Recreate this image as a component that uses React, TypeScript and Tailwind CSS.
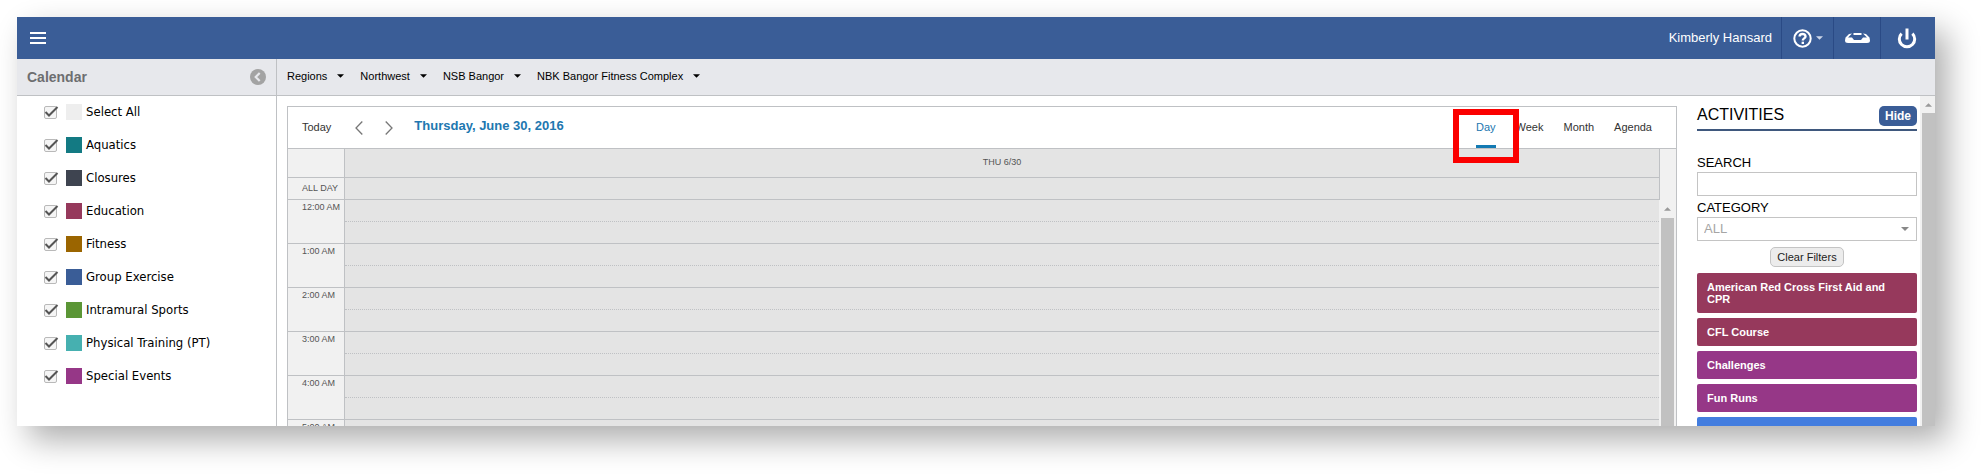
import { useState } from 'react';

interface CalendarCategory {
  name: string;
  color: string;
}

interface Activity {
  id: number;
  name: string;
  color: string;
}

const categories: CalendarCategory[] = [
  { name: 'Select All', color: 'bg-[#eeeeee]' },
  { name: 'Aquatics', color: 'bg-[#137a83]' },
  { name: 'Closures', color: 'bg-[#3e4450]' },
  { name: 'Education', color: 'bg-[#96395c]' },
  { name: 'Fitness', color: 'bg-[#9b6500]' },
  { name: 'Group Exercise', color: 'bg-[#3a5d97]' },
  { name: 'Intramural Sports', color: 'bg-[#5b9636]' },
  { name: 'Physical Training (PT)', color: 'bg-[#46b0b0]' },
  { name: 'Special Events', color: 'bg-[#963787]' },
];

const activities: Activity[] = [
  { id: 1, name: 'American Red Cross First Aid and CPR', color: 'bg-[#96395c]' },
  { id: 2, name: 'CFL Course', color: 'bg-[#96395c]' },
  { id: 3, name: 'Challenges', color: 'bg-[#963787]' },
  { id: 4, name: 'Fun Runs', color: 'bg-[#963787]' },
  { id: 5, name: '', color: 'bg-[#437ddf]' },
];

const locations = ['Regions', 'Northwest', 'NSB Bangor', 'NBK Bangor Fitness Complex'];
const views = ['Day', 'Week', 'Month', 'Agenda'];
const hours = ['12:00 AM', '1:00 AM', '2:00 AM', '3:00 AM', '4:00 AM', '5:00 AM'];

const Caret = ({ className }: { className: string }) => (
  <svg viewBox="0 0 8 4" className={className} fill="currentColor" aria-hidden="true">
    <path d="M0 0h8L4 4z" />
  </svg>
);

const TopBar = () => (
  <header className="flex h-[42px] shrink-0 items-stretch bg-[#3a5d97] text-white">
    <button aria-label="Menu" className="flex items-center px-[13px] pb-3 pt-[11px]">
      <svg viewBox="0 0 16 12" className="h-3 w-4" fill="currentColor">
        <path d="M0 0h16v2H0zM0 5h16v2H0zM0 10h16v2H0z" />
      </svg>
    </button>
    <span className="ml-auto flex items-center pr-[9px] text-[13px]">Kimberly Hansard</span>
    <button aria-label="Help" className="flex w-[52px] items-center justify-center gap-1 border-l border-[#2a4a85]">
      <svg viewBox="0 0 19 19" className="h-[19px] w-[19px]" fill="none" stroke="currentColor">
        <circle cx="9.5" cy="9.5" r="8.2" strokeWidth="2" />
        <path d="M6.6 7.6c0-3.6 5.9-3.4 5.9-.2 0 2-2.7 2-2.7 4" strokeWidth="2.4" />
        <path d="M8.6 12.7h2.400V15H8.6z" fill="currentColor" stroke="none" />
      </svg>
      <Caret className="h-1 w-[7px] text-[#ccd6e8]" />
    </button>
    <button aria-label="Inbox" className="flex w-[47px] items-center justify-center border-l border-[#2a4a85]">
      <svg viewBox="0 0 25 10" className="h-[10px] w-[25px]" fill="currentColor">
        <path d="M8.5 0h8v2h-8z" />
        <path d="M7 .5 4 1 .5 4.5 0 7.5Q0 10 3 10h19q3 0 3-2.5L24.5 4.5 21 1 18 .5l1.5 1.5L22 4.5h-4L16 7H9L7 4.5H3L5.5 2z" />
      </svg>
    </button>
    <button aria-label="Sign out" className="flex w-[55px] items-center justify-center border-l border-[#2a4a85] pr-[3px] pt-[2px]">
      <svg viewBox="0 0 20 22" className="h-[22px] w-5" fill="none" stroke="currentColor" strokeWidth="3">
        <path d="M4.6 5.6a7.700 7.700 0 1 0 10.800 0" />
        <path d="M10 .5v11" />
      </svg>
    </button>
  </header>
);

const Sidebar = () => (
  <aside className="flex w-[260px] shrink-0 flex-col border-r border-[#bfc1c4]">
    <div className="flex h-[37px] shrink-0 items-center justify-between border-b border-[#bfc1c4] bg-[#e7e8ec] px-[10px]">
      <h2 className="text-sm font-bold text-[#6d6e70]">Calendar</h2>
      <button aria-label="Collapse calendar list">
        <svg viewBox="0 0 16 16" className="h-4 w-4">
          <circle cx="8" cy="8" r="8" fill="#a3a3a3" />
          <path d="M9.7 4 5.7 8l4 4" fill="none" stroke="#e7e8ec" strokeWidth="2.2" />
        </svg>
      </button>
    </div>
    <ul className="pt-[3px] font-['DejaVu_Sans_Condensed','DejaVu_Sans',sans-serif] text-[13px] text-black">
      {categories.map(category => (
        <li key={category.name} className="flex h-[33px] items-start pl-[27px] pt-[5px]">
          <label className="flex items-center">
            <span className="grid">
              <input
                type="checkbox"
                defaultChecked
                className="peer col-start-1 row-start-1 h-[13px] w-[13px] appearance-none rounded-[2px] border border-[#b9b9b9] bg-[#f5f5f5]"
              />
              <svg
                viewBox="0 0 13 13"
                className="pointer-events-none invisible col-start-1 row-start-1 h-[13px] w-[13px] overflow-visible peer-checked:visible"
                fill="none"
                stroke="#555"
                strokeWidth="2"
              >
                <path d="M1.5 6 5 9.5 13.5 1" />
              </svg>
            </span>
            <span className={`ml-[9px] mr-1 h-4 w-4 ${category.color}`} />
            <span className="leading-4">{category.name}</span>
          </label>
        </li>
      ))}
    </ul>
  </aside>
);

const CalendarToolbar = () => {
  const [view, setView] = useState('Day');

  return (
    <div className="flex h-[42px] shrink-0 items-stretch border-b border-[#bfc1c4] pl-[14px] pr-6 text-[11px] text-[#333]">
      <button>Today</button>
      <button aria-label="Previous day" className="ml-6">
        <svg viewBox="0 0 8 14" className="h-[14px] w-2" fill="none" stroke="#777" strokeWidth="1.3">
          <path d="M7.3.5 1 7l6.3 6.5" />
        </svg>
      </button>
      <button aria-label="Next day" className="ml-[22px]">
        <svg viewBox="0 0 8 14" className="h-[14px] w-2" fill="none" stroke="#777" strokeWidth="1.3">
          <path d="M.7.5 7 7 .7 13.5" />
        </svg>
      </button>
      <h1 className="ml-[21px] flex items-center pb-[3px] text-[13px] font-bold text-[#2177b0]">
        Thursday, June 30, 2016
      </h1>
      <div className="ml-auto flex gap-5">
        {views.map(name => (
          <div key={name} className="relative flex">
            <button
              onClick={() => setView(name)}
              className={
                view === name
                  ? 'border-b-[3px] border-[#137ab3] pt-[3px] text-[#2177b0]'
                  : 'border-b-[3px] border-transparent pt-[3px]'
              }
            >
              {name}
            </button>
            {name === 'Day' && (
              <div className="pointer-events-none absolute -left-[23px] top-[2px] z-10 h-[54px] w-[66px] border-[6px] border-[#fb0000]" />
            )}
          </div>
        ))}
      </div>
    </div>
  );
};

const DayGrid = () => (
  <div className="flex min-h-0 flex-1 flex-col text-[9px] text-[#555]">
    <div className="flex shrink-0 bg-[#f1f1f1]">
      <table className="w-full table-fixed border-separate border-spacing-0">
        <thead>
          <tr className="h-[29px]">
            <th className="w-[57px] border-b border-r border-[#bfc1c4] bg-[#f1f1f1] p-0" />
            <th className="border-b border-r border-[#bfc1c4] bg-[#e4e4e4] p-0 font-normal">THU 6/30</th>
          </tr>
        </thead>
        <tbody>
          <tr className="h-[22px]">
            <th className="border-b border-r border-[#bfc1c4] bg-[#f1f1f1] p-0 pl-[14px] text-left font-normal">
              ALL DAY
            </th>
            <td className="border-b border-r border-[#bfc1c4] bg-[#e4e4e4] p-0" />
          </tr>
        </tbody>
      </table>
      <div className="w-4 shrink-0" />
    </div>
    <div className="flex min-h-0 flex-1 overflow-hidden">
      <table className="w-full table-fixed border-separate border-spacing-0 self-start">
        <tbody>
          {hours.map(hour => (
            <tr key={hour} className="h-11">
              <th className="w-[57px] whitespace-nowrap border-b border-r border-[#bfc1c4] bg-[#f1f1f1] p-0 pl-[14px] pt-px text-left align-top font-normal leading-3">
                {hour}
              </th>
              <td className="border-b border-[#bfc1c4] bg-[#e4e4e4] p-0 align-top">
                <div className="h-[22px] border-b border-dotted border-[#bfc1c4]" />
              </td>
            </tr>
          ))}
        </tbody>
      </table>
      <div className="flex w-[17px] shrink-0 flex-col items-center bg-[#f1f1f1]">
        <Caret className="my-[7px] h-1 w-[7px] rotate-180 text-[#999]" />
        <div className="w-[13px] flex-1 bg-[#c1c1c1]" />
      </div>
    </div>
  </div>
);

const ActivitiesPanel = () => (
  <aside className="flex w-[220px] shrink-0 flex-col pt-[10px] text-black">
    <div className="flex h-[25px] shrink-0 items-start justify-between border-b-2 border-[#3f587d]">
      <h2 className="text-base leading-[18px]">ACTIVITIES</h2>
      <button className="h-5 rounded-[5px] bg-[#3a5d97] px-[6px] text-xs font-bold text-white">Hide</button>
    </div>
    <label htmlFor="search" className="mt-[23px] text-[13px] leading-[18px]">
      SEARCH
    </label>
    <input
      id="search"
      type="text"
      className="h-6 w-full shrink-0 border border-[#c4c4c4] bg-white px-[6px] text-[13px]"
    />
    <label htmlFor="category" className="mt-[3px] text-[13px] leading-[18px]">
      CATEGORY
    </label>
    <div className="grid shrink-0 items-center">
      <select
        id="category"
        className="col-start-1 row-start-1 h-6 w-full appearance-none border border-[#c4c4c4] bg-white px-[6px] text-[13px] text-[#a5a5a5]"
      >
        <option>ALL</option>
      </select>
      <Caret className="pointer-events-none col-start-1 row-start-1 mr-2 h-1 w-2 justify-self-end text-[#888]" />
    </div>
    <button className="mt-[6px] h-5 shrink-0 self-center rounded-[5px] border border-[#c4c4c4] bg-[#ececec] px-[6px] text-[11px] text-[#222]">
      Clear Filters
    </button>
    <ul className="mt-[6px] flex flex-col gap-[5px] text-[11px] font-bold leading-3 text-white">
      {activities.map(activity => (
        <li key={activity.id} className={`min-h-7 rounded-[2px] py-2 pl-[10px] pr-4 ${activity.color}`}>
          {activity.name}
        </li>
      ))}
    </ul>
  </aside>
);

export default function App() {
  return (
    <div className="h-screen overflow-hidden bg-white pb-12 pl-[17px] pr-12 pt-[17px] font-['Liberation_Sans',Arial,sans-serif]">
      <div className="flex h-full flex-col bg-white shadow-[12px_14px_30px_rgba(0,0,0,0.32)]">
        <TopBar />
        <div className="flex min-h-0 flex-1 overflow-hidden">
          <Sidebar />
          <div className="flex min-w-0 flex-1 flex-col">
            <nav className="flex h-[37px] shrink-0 items-center gap-4 border-b border-[#bfc1c4] bg-[#e7e8ec] pb-[2px] pl-[10px] text-[11px] text-black">
              {locations.map(location => (
                <button key={location} className="flex items-center gap-[10px]">
                  {location}
                  <Caret className="h-1 w-[7px]" />
                </button>
              ))}
            </nav>
            <div className="flex min-h-0 flex-1">
              <main className="ml-[10px] mr-5 mt-[10px] flex min-w-0 flex-1 flex-col border-x border-t border-[#bfc1c4]">
                <CalendarToolbar />
                <DayGrid />
              </main>
              <ActivitiesPanel />
              <div className="ml-[3px] flex w-[15px] shrink-0 flex-col items-end bg-[#f1f1f1]">
                <Caret className="mb-[6px] mr-[3px] mt-[7px] h-1 w-[7px] rotate-180 text-[#999]" />
                <div className="w-[13px] flex-1 bg-[#c1c1c1]" />
              </div>
            </div>
          </div>
        </div>
      </div>
    </div>
  );
}
